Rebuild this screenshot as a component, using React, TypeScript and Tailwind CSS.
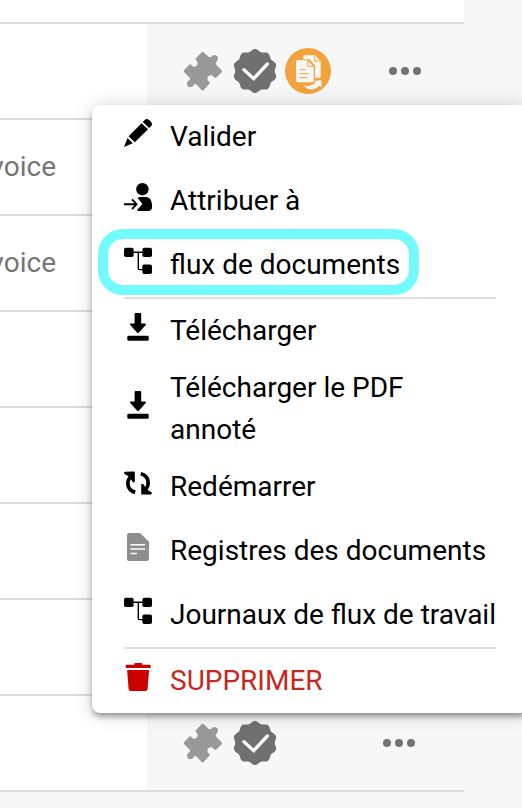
import React from "react";

type IconProps = { className?: string };

const Svg = ({ children, className = "" }: { children: React.ReactNode; className?: string }) => (
  <svg viewBox="0 0 28 28" className={`block h-7 w-7 shrink-0 ${className}`} fill="currentColor">
    {children}
  </svg>
);

const PencilIcon = () => (
  <Svg>
    <path d="M3.6 19 8.8 24.2 0 28Z" />
    <path d="M4.6 17.2 17.6 4.2 24 10.3 10.8 23.3Z" />
    <path d="M18.8 3 20.7 1.1Q22.2-.5 24.3.4 26.8 1.7 27.7 4 28.4 5.8 27.3 7L25.2 9Z" />
  </Svg>
);

const AssignIcon = () => (
  <Svg>
    <circle cx="18.4" cy="6.2" r="6.2" />
    <path d="M13.4 14.7Q15 13.9 17 14H21.5Q27.6 14.3 28 21.5V24Q28 28 24 28H15.5Q13.7 28 12.8 27.2L18.4 21Z" />
    <path d="M0 21.2H12M8 16.4 12.6 21.2 8 26" fill="none" stroke="currentColor" strokeWidth="1.9" />
  </Svg>
);

const FlowIcon = () => (
  <Svg>
    <rect x="0" y=".7" width="9.6" height="9.4" rx="1.8" />
    <rect x="18.4" y=".7" width="9.6" height="9.4" rx="1.8" />
    <rect x="18.4" y="17.5" width="9.6" height="9.5" rx="1.8" />
    <path d="M9 5.3H19M14.3 5.3V21.5Q14.3 22.6 15.4 22.6H19" fill="none" stroke="currentColor" strokeWidth="1.4" />
  </Svg>
);

const DownloadIcon = () => (
  <Svg>
    <path d="M11.8 0H16Q17.2 0 17.2 1.2V10.5H21Q22.6 10.8 21.7 12L15 19.6Q14 20.7 13 19.6L6.2 12Q5.3 10.8 6.8 10.5H10.6V1.2Q10.6 0 11.8 0Z" />
    <rect x="3.3" y="22.7" width="21.4" height="5.1" rx="1.4" />
  </Svg>
);

const RestartIcon = () => (
  <Svg>
    <g stroke="currentColor" strokeLinecap="round" strokeLinejoin="round">
      <path d="M11.2 23.4C2.6 21 1.6 11.5 8 6.4" fill="none" strokeWidth="3.7" strokeLinecap="butt" />
      <path d="M1.3 4 9.6 3.8V12.2L6.2 7Z" strokeWidth="2.4" />
      <path d="M16.8 4.8C25.4 7 26.4 16.7 20 21.8" fill="none" strokeWidth="3.7" strokeLinecap="butt" />
      <path d="M26.7 24.2 18.4 24.4V16L21.8 21.2Z" strokeWidth="2.4" />
    </g>
  </Svg>
);

const DocumentIcon = () => (
  <Svg className="text-[#8e8e8e]">
    <path d="M5 0H16L25 8.7V26Q25 28 23 28H5Q3 28 3 26V2Q3 0 5 0Z" />
    <path d="M7 11.7H20.5M7 16H20.5M7 20.4H12.5" stroke="#fff" strokeWidth="1.5" strokeLinecap="round" />
  </Svg>
);

const TrashIcon = () => (
  <Svg className="text-[#cc0000]">
    <path d="M10.3 1.7V1Q10.3 0 11.3 0H17.3Q18.3 0 18.3 1V1.7H25.7Q26.7 1.7 26.7 2.7V5H1.7V2.7Q1.7 1.7 2.7 1.7Z" />
    <path d="M3.1 7H25.1L23.6 26Q23.4 28 21.5 28H6.7Q4.8 28 4.6 26Z" />
  </Svg>
);

const PuzzleIcon = ({ className = "" }: IconProps) => (
  <svg viewBox="10 32 120 120" className={`block h-10 w-10 ${className}`} fill="#999">
    <path d="M66 36Q69 32 72 36L85 48Q90 53 95 49Q98 44 105 44Q115 46 115 55Q114 61 110 64Q106 70 111 75L125 89Q129 93 125 97L109 112Q105 114 102 109Q98 103 91 105Q83 108 83 115Q83 121 89 124Q92 128 88 132L72 149Q69 152 66 149L51 133Q47 129 43 133Q41 140 32 141Q22 140 22 130Q22 122 29 120Q34 116 30 112L14 96Q10 93 14 89L28 74Q32 70 35 74Q39 80 46 79Q54 76 54 69Q54 63 49 60Q46 56 50 52Z" />
  </svg>
);

const badgePoints = Array.from({ length: 200 }, (_, i) => {
  const a = (i / 200) * Math.PI * 2;
  const r = 62.6 + 3.4 * Math.cos(a * 10);
  return `${(66 + r * Math.sin(a)).toFixed(2)},${(66 - r * Math.cos(a)).toFixed(2)}`;
}).join(" ");

const BadgeIcon = ({ className = "" }: IconProps) => (
  <svg viewBox="0 0 132 132" className={`block h-11 w-11 ${className}`}>
    <polygon points={badgePoints} fill="#707070" />
    <path d="M33 62 62 89 103 45" fill="none" stroke="#f7f7f7" strokeWidth="10" strokeLinecap="round" />
  </svg>
);

const CopyDocumentsIcon = ({ className = "" }: IconProps) => (
  <svg viewBox="14 23 138 138" className={`block h-[46px] w-[46px] ${className}`}>
    <circle cx="83" cy="92" r="69" fill="#f2a33b" />
    <g fill="#f7f7f7">
      <path d="M72 45H104L121 62V109Q121 112 118 112H104V76L88 57H69V48Q69 45 72 45Z" />
      <path d="M50 60H81L100 79V122Q100 126 96 126H51Q47 126 47 122V63Q47 60 50 60Z" />
      <path d="M70 135Q81 140 93 135Q102 131 106 126L101 121 123 120 124 141 117 136Q105 148 90 147Q77 146 70 135Z" />
    </g>
    <g fill="none" stroke="#f2a33b" strokeWidth="3">
      <path d="M103 47V62H119M82 61V78H99" />
      <path d="M58 88H74M58 100H85M58 112H80" strokeLinecap="round" />
    </g>
  </svg>
);

const Dots = ({ className = "" }: IconProps) => (
  <div className={`flex gap-1 ${className}`}>
    <span className="h-2 w-2 rounded-full bg-[#737373]" />
    <span className="h-2 w-2 rounded-full bg-[#737373]" />
    <span className="h-2 w-2 rounded-full bg-[#737373]" />
  </div>
);

const Row = ({ label, children }: { label?: string; children?: React.ReactNode }) => (
  <div className="flex h-24 shrink-0 border-b-2 border-[#dcdcdc]">
    <div className="flex w-[147px] shrink-0 items-center bg-white">
      {label && <span className="flex w-14 justify-end text-[28px] leading-8 text-[#757575]">{label}</span>}
    </div>
    <div className="flex flex-1 items-center bg-[#f7f7f7]">{children}</div>
  </div>
);

const Item = ({
  icon,
  label,
  className = "h-16",
  textClass = "",
}: {
  icon: React.ReactNode;
  label: string;
  className?: string;
  textClass?: string;
}) => (
  <div className={`flex shrink-0 items-center gap-[18px] pl-8 ${className}`}>
    <div className="pb-2">{icon}</div>
    <span className={`w-[334px] text-[28px] leading-[42px] ${textClass}`}>{label}</span>
  </div>
);

const Divider = () => <div className="mx-8 h-0.5 shrink-0 bg-[#e0e0e0]" />;

export default function App() {
  return (
    <div className="relative h-[808px] w-[522px] overflow-hidden bg-[#f7f7f7] font-['Roboto',sans-serif]">
      <div className="flex w-[464px] flex-col">
        <div className="h-6 shrink-0 border-b-2 border-[#dcdcdc] bg-white" />
        <Row>
          <PuzzleIcon className="ml-[36px]" />
          <BadgeIcon className="ml-[10px]" />
          <CopyDocumentsIcon className="ml-[8px]" />
          <Dots className="ml-[57.5px]" />
        </Row>
        <Row label="voice" />
        <Row label="voice" />
        <Row />
        <Row />
        <Row />
        <Row />
        <Row>
          <PuzzleIcon className="ml-[36px]" />
          <BadgeIcon className="ml-[10px]" />
          <Dots className="ml-[105.5px]" />
        </Row>
      </div>

      <div className="absolute left-[92px] top-[105px] flex h-[608px] w-[436px] flex-col rounded-lg bg-white text-black shadow-[0_4px_6px_-1px_rgba(0,0,0,0.4),0_1px_20px_0_rgba(0,0,0,0.16)]">
        <Item icon={<PencilIcon />} label="Valider" />
        <Item icon={<AssignIcon />} label="Attribuer à" />
        <Item icon={<FlowIcon />} label="flux de documents" />
        <Divider />
        <Item icon={<DownloadIcon />} label="Télécharger" />
        <Item icon={<DownloadIcon />} label="Télécharger le PDF annoté" className="h-[92px]" textClass="max-w-[260px]" />
        <Item icon={<RestartIcon />} label="Redémarrer" />
        <Item icon={<DocumentIcon />} label="Registres des documents" />
        <Item icon={<FlowIcon />} label="Journaux de flux de travail" />
        <Divider />
        <Item icon={<TrashIcon />} label="SUPPRIMER" textClass="text-[#c62820]" />
        <div className="pointer-events-none absolute left-[6px] top-[124px] h-[66px] w-[321px] rounded-[25px] border-[10px] border-[#73faff]" />
      </div>
    </div>
  );
}
